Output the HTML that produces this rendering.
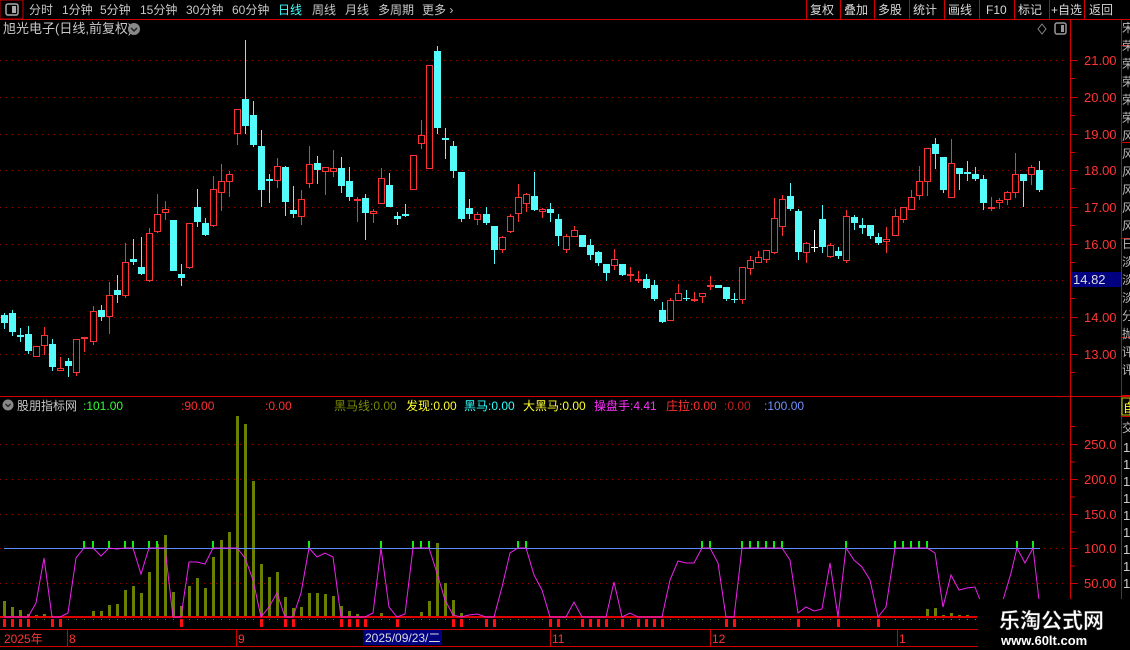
<!DOCTYPE html>
<html><head><meta charset="utf-8">
<style>
html,body{margin:0;padding:0;background:#000;width:1130px;height:650px;overflow:hidden}
svg{display:block}
text{font-family:"Liberation Sans","Noto Sans CJK SC",sans-serif}
</style></head><body>
<svg id="s" width="1130" height="650" viewBox="0 0 1130 650" xmlns="http://www.w3.org/2000/svg"></svg>
<script>
var o=[];
function R(x,y,w,h,f,extra){o.push('<rect x="'+x+'" y="'+y+'" width="'+w+'" height="'+h+'" fill="'+f+'" '+(extra||'')+'/>');}
function L(x1,y1,x2,y2,c,w,extra){o.push('<line x1="'+x1+'" y1="'+y1+'" x2="'+x2+'" y2="'+y2+'" stroke="'+c+'" stroke-width="'+(w||1)+'" '+(extra||'')+'/>');}
function T(x,y,s,c,sz,extra){o.push('<text x="'+x+'" y="'+y+'" fill="'+c+'" font-size="'+(sz||12)+'" '+(extra||'')+'>'+s+'</text>');}
var RED='#d00000';
// toolbar
L(0,19.5,1130,19.5,RED);
R(0,0,23,19,'#000','stroke="'+RED+'"');
R(6,4,12,11,'none','stroke="#aaa" stroke-width="1.5" rx="2"');R(12,6,4,7,'#aaa');
var tb=[['分时',29],['1分钟',62],['5分钟',100],['15分钟',140],['30分钟',186],['60分钟',232],['日线',278],['周线',312],['月线',345],['多周期',378],['更多 ›',422]];
tb.forEach(function(a){T(a[1],14,a[0],a[0]=='日线'?'#40ffff':'#c8c8c8',12);});
[806,840,874,909,944,979,1014,1049,1084].forEach(function(x){L(x+.5,0,x+.5,19,RED);});
var rb=[['复权',810],['叠加',844],['多股',878],['统计',913],['画线',948],['F10',986],['标记',1018],['+自选',1051],['返回',1089]];
rb.forEach(function(a){T(a[1],14,a[0],'#d8d8d8',12);});
// title
T(3,33,'旭光电子(日线,前复权)','#c8c8c8',13);
o.push('<circle cx="134" cy="29" r="6" fill="#888"/><path d="M131 28 L134 31 L137 28" stroke="#222" stroke-width="1.5" fill="none"/>');
o.push('<path d="M1042 24 L1046 29 L1042 34 L1038 29Z" stroke="#888" fill="none"/>');
R(1055,23,11,11,'none','stroke="#999" stroke-width="1.5" rx="2"');R(1061,25,3,7,'#999');
// frames
L(1070.5,19,1070.5,599,RED);L(1121.5,19,1121.5,599,RED);
L(0,396.5,1130,396.5,RED);
[45,142,238,337,395].forEach(function(y){L(1122,y+.5,1130,y+.5,RED);});
// right strip chars
var sc='宋荣荣荣荣荣风风风风风风日淡淡淡分抛评评';
for(var k=0;k<sc.length;k++){T(1122,32+k*18,sc[k],'#bbb',12);}
// top grid
var gy=[60,97,134,170,207,244,280,317,354],gl=['21.00','20.00','19.00','18.00','17.00','16.00',null,'14.00','13.00'];
gy.forEach(function(y,i){L(0,y+.5,1068,y+.5,'#a00000',1,'stroke-dasharray="1 5"');L(1071,y+.5,1078,y+.5,RED);if(gl[i])T(1084,y+5,gl[i],'#ff3434',13);
L(1071,y+18.5,1075,y+18.5,RED);});
R(1071,272,50,15,'#000080');T(1073,284,'14.82','#ddd',13);
// candles
var C=[['c',315,323,313,329],['c',313,332,310,336],['c',335,337,328,342],['c',334,351,326,354],['r',346,357,346,357],['r',335,346,327,355],['c',344,367,339,371],['r',368,371,357,371],['c',361,366,358,377],['r',339,373,339,376],
['r',337,339,337,352],['r',311,342,306,345],['c',310,317,305,321],['r',295,317,282,334],['c',290,295,275,303],['r',262,296,243,298],['c',259,262,239,265],['c',267,274,237,275],['r',233,281,228,282],['r',214,232,194,233],
['r',209,213,201,220],['c',220,271,220,271],['c',274,278,264,286],['r',223,268,223,269],['c',207,222,189,227],['c',223,235,218,236],['r',189,226,176,227],['r',181,193,164,211],['r',174,182,171,197],['r',109,134,109,145],
['c',99,126,40,134],['c',115,145,101,147],['c',146,190,130,207],['c',179,181,174,203],['r',166,181,158,188],['c',167,202,166,216],['c',210,214,186,218],['r',199,217,190,225],['r',164,184,146,188],['c',163,170,156,184],
['r',167,172,167,195],['r',168,172,150,177],['c',168,186,157,193],['c',181,197,167,201],['r',199,201,197,222],['c',198,213,194,240],['r',211,214,209,223],['r',178,204,168,204],['c',185,207,173,207],['c',216,219,212,225],
['c',214,216,204,217],['r',155,190,155,190],['r',135,144,120,149],['r',65,169,65,169],['c',51,128,46,134],['c',138,140,128,159],['c',146,171,141,178],['c',172,219,172,222],['c',208,214,199,219],['r',214,220,212,225],
['c',214,223,207,225],['c',226,250,226,264],['r',237,250,236,253],['r',216,232,214,233],['r',197,214,184,222],['r',194,204,193,212],['c',196,210,172,211],['r',209,212,208,218],['c',209,213,203,222],['c',219,236,214,246],
['r',236,250,234,253],['r',230,237,226,237],['c',235,247,235,247],['c',245,255,239,260],['c',252,263,251,266],['c',264,273,264,281],['r',259,266,249,270],['c',264,275,264,276],['r',274,276,267,282],['r',279,280,271,283],
['c',279,288,274,289],['c',285,299,280,301],['c',310,322,302,323],['r',300,321,298,321],['r',293,301,284,301],['c',298,299,290,301],['r',299,301,292,302],['r',293,297,293,303],['r',285,287,276,290],['c',285,288,285,288],
['c',287,299,287,301],['c',299,300,293,303],['r',267,300,267,304],['r',260,269,256,275],['r',257,263,251,263],['r',250,260,250,263],['r',218,253,198,254],['r',199,227,195,236],['c',196,209,183,211],['c',211,252,209,260],
['r',243,253,242,263],['w',247,248,230,252],['c',219,247,205,253],['r',245,257,243,258],['c',251,256,247,259],['r',216,261,210,263],['c',217,223,215,230],['c',225,228,218,234],['c',225,236,225,239],['c',237,243,233,245],
['r',239,242,227,253],['r',216,236,209,236],['r',207,220,207,223],['r',197,210,190,210],['r',181,196,166,200],['r',148,182,148,196],['c',144,154,138,169],['c',157,190,157,193],['r',163,198,139,198],['c',168,174,168,190],
['c',172,174,161,181],['c',174,179,167,181],['c',179,203,175,210],['r',207,208,197,211],['r',200,203,198,209],['r',192,200,191,205],['r',174,193,153,198],['c',174,181,174,207],['r',167,175,165,185],['c',170,190,161,192]];
function cx(i){return Math.round(4.3+8.02*i);}
C.forEach(function(c,i){var x=cx(i),t=c[0],col=t=='r'?'#ff3232':(t=='w'?'#fff':'#54fcfc');
 L(x+.5,c[3],x+.5,c[4],col);
 var h=Math.max(c[2]-c[1],1);
 if(t=='r'){ if(h<=2)R(x-3,c[1],7,2,col); else R(x-2.5,c[1]+.5,6,h-1,'#000','stroke="'+col+'"');}
 else if(t=='w'){R(x-3,c[1],7,1,col);}
 else R(x-3,c[1],7,h,col);
});
// indicator title
o.push('<circle cx="8" cy="405" r="5.5" fill="#888"/><path d="M5.5 404 L8 406.5 L10.5 404" stroke="#222" stroke-width="1.3" fill="none"/>');
T(17,410,'股朋指标网','#c8c8c8',12);
T(83,410,':101.00','#30ff30',12);T(181,410,':90.00','#ff3030',12);T(265,410,':0.00','#ff3030',12);
T(334,410,'黑马线:0.00','#7a8a00',12);T(406,410,'发现:0.00','#ffff30',12);T(464,410,'黑马:0.00','#30ffff',12);
T(523,410,'大黑马:0.00','#ffff30',12);T(594,410,'操盘手:4.41','#ff30ff',12);T(666,410,'庄拉:0.00','#ff3030',12);
T(724,410,':0.00','#c02020',12);T(764,410,':100.00','#7090ff',12);
// indicator grid/axis
var iy=[[444,'250.0'],[479,'200.0'],[514,'150.0'],[548,'100.0'],[583,'50.00']];
iy.forEach(function(a){L(0,a[0]+.5,1068,a[0]+.5,'#a00000',1,'stroke-dasharray="1 5"');L(1071,a[0]+.5,1078,a[0]+.5,RED);L(1071,a[0]+18,1075,a[0]+18,RED);T(1084,a[0]+5,a[1],'#ff3434',13);});
L(1071,426.5,1075,426.5,RED);
R(1122,398,8,17,'#000','stroke="#c8c800"');T(1123,412,'自','#ffff30',12);
L(1122,416.5,1130,416.5,RED);T(1122,432,'交','#bbb',12);
for(var k=0;k<9;k++)T(1123,452+k*17,'1','#ccc',13);
// bars
var B={0:601,1:607,2:610,3:614,4:615,5:614,10:616,11:611,12:611,13:605,14:604,15:590,16:586,17:593,18:572,19:544,20:535,21:592,22:606,23:586,24:578,25:588,26:557,27:540,28:532,29:416,30:424,31:481,32:564,33:577,34:572,35:597,36:608,37:607,38:593,39:593,40:594,41:596,42:606,43:611,44:614,47:613,52:612,53:601,54:543,55:583,56:600,57:613,115:609,116:608,117:615,118:613,119:615,120:615};
for(var k in B){R(cx(+k)-1,B[k],3,617-B[k],'#6b8000');}
// baseline
R(0,616,977,2,'#e00000');
for(var i=0;i<122;i++)R(cx(i),619,1,1,'#6b8000');
// red marks
[0,1,2,3,6,7,22,32,35,36,42,43,44,45,49,56,57,60,61,68,69,72,73,74,75,77,79,80,81,82,90,91,99,104,109].forEach(function(i){R(cx(i)-1,619,3,8,'#ff1010');});
// blue line
L(4,548.5,1040,548.5,'#5a8cff');
// green ticks
[10,11,13,15,16,18,19,26,38,47,51,52,53,64,65,87,88,92,93,94,95,96,97,105,111,112,113,114,115].forEach(function(i){R(cx(i)-1,541,2,7,'#10ee10');});
R(1016,541,2,7,'#10ee10');R(1032,541,2,7,'#10ee10');
// magenta line
var LY=[617,617,617,617,603,558,617,617,613,558,548,548,556,548,549,548,548,574,548,548,548,617,617,562,562,564,548,548,548,548,558,580,617,607,593,617,617,593,548,557,553,557,617,617,617,617,613,548,607,617,614,548,548,548,573,600,615,617,615,614,617,617,587,553,548,548,575,590,617,617,617,602,617,617,617,617,582,617,613,617,617,617,617,580,561,563,563,548,548,563,617,617,548,548,548,548,548,548,560,613,607,611,609,563,617,548,560,567,580,617,607,548,548,548,548,548,553,607,575,590,588,587];
var p=LY.map(function(y,i){return cx(i)+','+y;}).join(' ')+' 980,600';
o.push('<polyline points="'+p+'" fill="none" stroke="#ee22ee" stroke-width="1"/>');
o.push('<polyline points="1003,600 1011,573 1017,548 1025,563 1033,548 1039,600" fill="none" stroke="#ee22ee" stroke-width="1"/>');
// date axis
L(0,629.5,1122,629.5,RED);L(0,646.5,1122,646.5,RED);
[67,236,550,710,897].forEach(function(x){L(x+.5,630,x+.5,646,RED);});
T(4,643,'2025年','#ff3434',12);T(69,643,'8','#ff3434',12);T(238,643,'9','#ff3434',12);
T(552,643,'11','#ff3434',12);T(712,643,'12','#ff3434',12);T(899,643,'1','#ff3434',12);
R(363,630,79,15,'#000080');T(365,642,'2025/09/23/二','#ddd',12);
// watermark
R(978,599,152,51,'#000');
T(999,628,'乐淘公式网','#fff',21,'font-weight="bold" stroke="#333" stroke-width="0.5"');
T(1001,645,'www.60lt.com','#fff',13,'font-weight="bold" font-family="Liberation Serif,serif"');
document.getElementById('s').innerHTML=o.join('');
</script>
</body></html>
